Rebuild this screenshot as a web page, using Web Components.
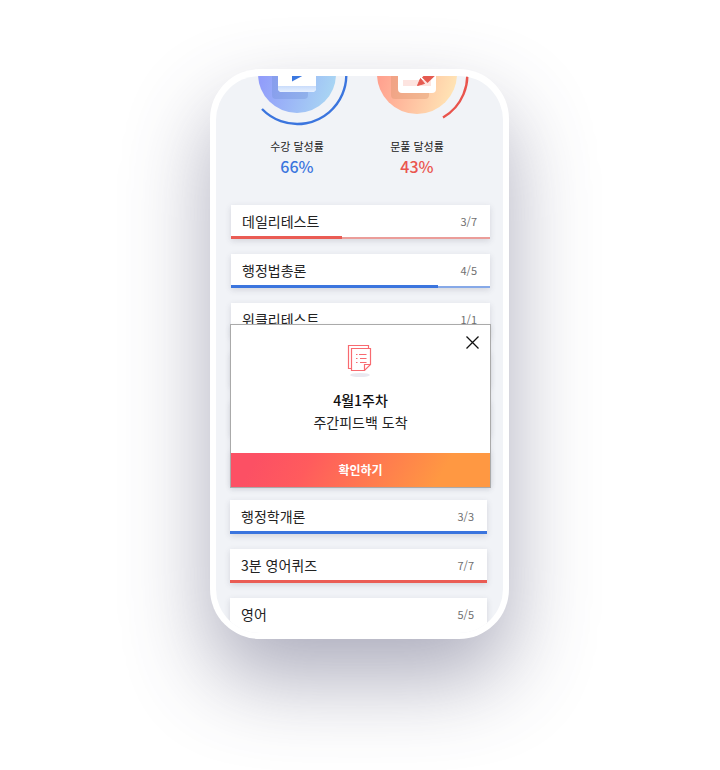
<!DOCTYPE html>
<html lang="ko">
<head>
<meta charset="utf-8">
<title>주간피드백</title>
<style>
  body {
    margin: 0;
    min-height: 100vh;
    background: #fff;
    color: #222;
    font-family: "Noto Sans CJK KR", "Noto Sans", sans-serif;
  }
</style>
</head>
<body>
<phone-frame>
  <achievement-group>
    <achievement-ring tone="blue" label="수강 달성률" value="66%"></achievement-ring>
    <achievement-ring tone="red" label="문풀 달성률" value="43%"></achievement-ring>
  </achievement-group>
  <course-list>
    <course-row name="데일리테스트" done="3" total="7" tone="red"></course-row>
    <course-row name="행정법총론" done="4" total="5" tone="blue"></course-row>
    <course-row name="위클리테스트" done="1" total="1" tone="red"></course-row>
    <course-row></course-row>
    <course-row></course-row>
    <course-row></course-row>
    <feedback-dialog slot="overlay">
      <strong slot="title">4월1주차</strong>
      <span slot="message">주간피드백 도착</span>
      <span slot="action">확인하기</span>
    </feedback-dialog>
  </course-list>
  <course-list compact>
    <course-row name="행정학개론" done="3" total="3" tone="blue"></course-row>
    <course-row name="3분 영어퀴즈" done="7" total="7" tone="red"></course-row>
    <course-row name="영어" done="5" total="5"></course-row>
  </course-list>
</phone-frame>

<script>
  const attach = (host, html) => {
    host.attachShadow({ mode: "open" }).innerHTML = html;
  };

  customElements.define("phone-frame", class extends HTMLElement {
    connectedCallback() {
      attach(this, `
        <style>
          :host { display: block; padding: 69px 17px 64px 16px; }
          .case {
            max-width: 287px;
            margin: 0 auto;
            padding: 7px 6px 6px;
            border-radius: 50px;
            background: #fff;
            box-shadow: 0 40px 84px rgba(66, 66, 102, .43);
          }
          .screen {
            height: 557px;
            overflow: hidden;
            border-radius: 44px;
            background: #f1f3f7;
          }
        </style>
        <div class="case"><main class="screen"><slot></slot></main></div>`);
    }
  });

  customElements.define("achievement-group", class extends HTMLElement {
    connectedCallback() {
      attach(this, `
        <style>
          :host { display: grid; grid-template-columns: 1fr 1fr; padding: 0 28px 29px 21px; }
        </style>
        <slot></slot>`);
    }
  });

  const ringArt = {
    blue: `
      <defs><linearGradient id="g" x1="0" y1=".35" x2="1" y2=".65">
        <stop offset="0" stop-color="#8f97fb"/><stop offset="1" stop-color="#a9d6f3"/>
      </linearGradient>
      <linearGradient id="s" x1="0" y1="0" x2="0" y2="1">
        <stop offset="0" stop-color="#c9dcfb"/><stop offset="1" stop-color="#e6f0ff"/>
      </linearGradient></defs>
      <circle cx="60" cy="-2" r="39" fill="url(#g)"/>
      <path d="M35 -12H71V19Q71 23 67 23H39Q35 23 35 19Z" fill="#6f8fd8" opacity=".35"/>
      <path d="M41 -16H79V12Q79 16 75 16H45Q41 16 41 12Z" fill="#fff"/>
      <path d="M41 10H79V12Q79 16 75 16H45Q41 16 41 12Z" fill="url(#s)"/>
      <path d="M55 -12V5.500L68 -1.500Z" fill="#3b78e0"/>
      <path d="M60.500 -50A49 49 0 1 1 25 33" fill="none" stroke="#3b75de" stroke-width="2.400"/>`,
    red: `
      <defs><linearGradient id="g" x1="0" y1=".4" x2="1" y2=".7">
        <stop offset="0" stop-color="#ff9c8c"/><stop offset="1" stop-color="#ffe6b6"/>
      </linearGradient></defs>
      <circle cx="60" cy="-2" r="40" fill="url(#g)"/>
      <path d="M34 -12H72V19Q72 23 68 23H38Q34 23 34 19Z" fill="#d9946c" opacity=".38"/>
      <path d="M41 -16H79V13Q79 17 75 17H45Q41 17 41 13Z" fill="#fff"/>
      <path d="M46 -3H68V0H46ZM46 4H74V10H46Z" fill="#fde4e0"/>
      <path d="M60.500 9.500L63.500 2.500L67.500 7.500Z" fill="#e55a50" stroke="#e55a50" stroke-linejoin="round"/>
      <path d="M65 1.500L70.500 7L82 -4L76 -10Z" fill="#e55a50"/>
      <path d="M62 -49A48.500 48.500 0 0 1 86 41.500" fill="none" stroke="#e9544d" stroke-width="2.400"/>`
  };

  customElements.define("achievement-ring", class extends HTMLElement {
    connectedCallback() {
      const tone = this.getAttribute("tone");
      attach(this, `
        <style>
          :host { display: flex; flex-direction: column; align-items: center; color: #222; }
          svg { width: 120px; height: 60px; display: block; }
          .label { font-size: 11px; line-height: 20px; white-space: nowrap; }
          .value { font-size: 16px; line-height: 20px; font-weight: 500; }
          .blue { color: #3b75de; }
          .red { color: #ea554e; }
        </style>
        <svg viewBox="0 0 120 60" aria-hidden="true">${ringArt[tone]}</svg>
        <span class="label">${this.getAttribute("label")}</span>
        <span class="value ${tone}">${this.getAttribute("value")}</span>`);
    }
  });

  customElements.define("course-list", class extends HTMLElement {
    connectedCallback() {
      attach(this, `
        <style>
          :host { display: grid; gap: 15px; position: relative; padding: 0 13px 16px 15px; }
          :host([compact]) { padding: 0 16px 0 14px; }
        </style>
        <slot></slot><slot name="overlay"></slot>`);
    }
  });

  customElements.define("course-row", class extends HTMLElement {
    connectedCallback() {
      const name = this.getAttribute("name") || "";
      const done = this.getAttribute("done");
      const total = this.getAttribute("total");
      const share = total ? done / total * 100 : 0;
      attach(this, `
        <style>
          :host {
            display: block;
            min-height: 34px;
            background: #fff;
            box-shadow: 0 2px 6px rgba(60, 65, 90, .16);
            --main: #3b75de;
            --soft: #86a9e8;
          }
          :host([tone="red"]) { --main: #ea5c54; --soft: #eb9d99; }
          :host(:not([tone])) { min-height: 36px; }
          .text { display: flex; justify-content: space-between; align-items: center; height: 31px; padding: 0 13px 0 11px; }
          .name { font-size: 14px; line-height: 20px; color: #222; }
          .count { font-size: 11px; line-height: 20px; color: #707070; }
          .track { height: 3px; display: flex; align-items: flex-end; }
          :host(:not([tone])) .track { display: none; }
          :host(:not([total])) { min-height: 34px; }
          .fill { height: 3px; width: ${share}%; background: var(--main); }
          .rest { height: 2px; flex: 1; background: var(--soft); }
        </style>
        ${total ? `
        <div class="text"><span class="name">${name}</span><span class="count">${done}/${total}</span></div>
        <div class="track"><div class="fill"></div><div class="rest"></div></div>` : ""}`);
    }
  });

  customElements.define("feedback-dialog", class extends HTMLElement {
    connectedCallback() {
      attach(this, `
        <style>
          :host {
            display: block;
            position: absolute;
            top: 119px;
            left: 14px;
            right: 12px;
            border: 1px solid #aaa;
            background: #fff;
            box-shadow: 0 2px 5px rgba(60, 65, 90, .12);
          }
          section { display: flex; flex-direction: column; align-items: center; height: 128px; }
          .art { width: 28px; height: 36px; margin-top: 18px; }
          .title { margin-top: 10px; font-size: 14px; line-height: 22px; font-weight: 500; color: #111; }
          .message { font-size: 14px; line-height: 22px; color: #222; }
          ::slotted(strong) { font-weight: 500; }
          .close {
            position: absolute;
            top: 10px;
            right: 10px;
            width: 15px;
            height: 15px;
            padding: 0;
            border: 0;
            background: none;
          }
          .close svg { display: block; }
          .action {
            display: block;
            width: 100%;
            height: 34px;
            padding: 0;
            border: 0;
            background: linear-gradient(120deg, #fc5064 10%, #ff5b5d 30%, #ff9842 80%);
            color: #fff;
            font: 700 12px/20px "Noto Sans CJK KR", "Noto Sans", sans-serif;
          }
        </style>
        <section>
          <svg class="art" viewBox="1 0 28 36" aria-hidden="true">
            <ellipse cx="14" cy="32" rx="10" ry="2" fill="#e9e9f0"/>
            <g fill="none" stroke="#f86a70" stroke-width="1.200">
              <path d="M5.500 25.500H2.500V2.500H22.500V5.500" fill="#fff"/>
              <path d="M5.500 5.500H24.500V21.500L18.500 27.500H5.500Z" fill="#fff"/>
              <path d="M18.500 27.500V21.500H24.500"/>
              <path d="M10 11.500H11.500M13 11.500H20.500M10 15.500H11.500M14 15.500H20.500M10 19.500H11.500M14 19.500H20.500"/>
            </g>
          </svg>
          <span class="title"><slot name="title"></slot></span>
          <span class="message"><slot name="message"></slot></span>
        </section>
        <button class="close" type="button" aria-label="닫기">
          <svg width="15" height="15" viewBox="0 0 15 15"><path d="M1.500 1.500L13.500 13.500M13.500 1.500L1.500 13.500" stroke="#111" stroke-width="1.300" fill="none"/></svg>
        </button>
        <button class="action" type="button"><slot name="action"></slot></button>`);
    }
  });
</script>
</body>
</html>
